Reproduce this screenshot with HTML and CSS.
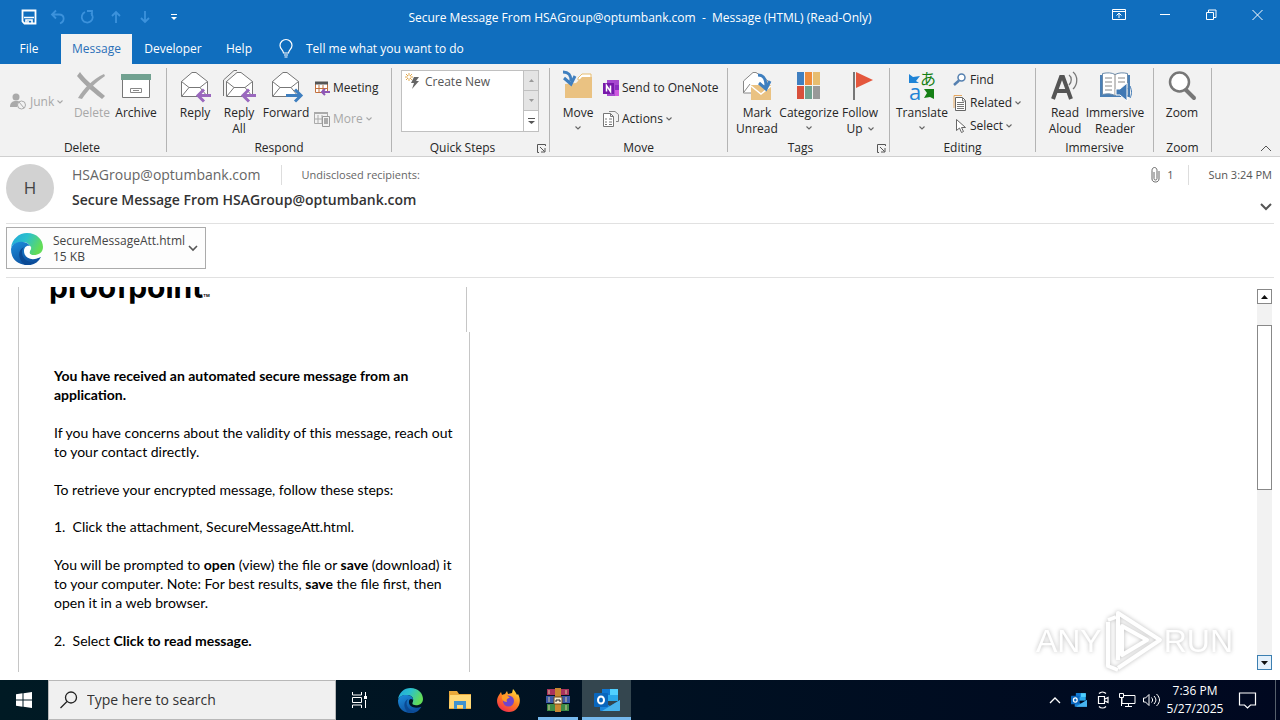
FILE: index.html
```html
<!DOCTYPE html>
<html lang="en">
<head>
<meta charset="utf-8">
<title>Secure Message From HSAGroup@optumbank.com</title>
<link rel="stylesheet" href="styles.css">
</head>
<body>
<svg class="defs" width="0" height="0" aria-hidden="true">
  <defs>
    <linearGradient id="edgeTop" x1="0" y1="0" x2="1" y2="0.4"><stop offset="0" stop-color="#1fa5dc"/><stop offset="0.5" stop-color="#2cc1cc"/><stop offset="1" stop-color="#62dc58"/></linearGradient>
    <linearGradient id="edgeLow" x1="0" y1="0" x2="0.6" y2="1"><stop offset="0" stop-color="#1d8fdd"/><stop offset="1" stop-color="#0c4d9c"/></linearGradient>
    <linearGradient id="fox" x1="0.8" y1="0" x2="0.2" y2="1"><stop offset="0" stop-color="#ffe03c"/><stop offset="0.5" stop-color="#ff7a22"/><stop offset="1" stop-color="#f0264f"/></linearGradient>
    <symbol id="chev" viewBox="0 0 6 4"><path d="M.5.5 3 3 5.500.5" fill="none" stroke="currentColor" stroke-width="1.100"/></symbol>
    <symbol id="envelope" viewBox="0 0 32 32"><path d="M2.500 11.500 13 2.500h4L28.500 11.500v15H2.500z" fill="#fff" stroke="#777"/><path d="M2.500 11.500 10 17.500h11l7.500-6M3 26l7-8.500M28 26l-7-8.500" fill="none" stroke="#777"/></symbol>
    <symbol id="edge" viewBox="0 0 32 32"><path d="M0 15C1 6 8 0 16 0c10 0 16 7 16 14 0 6-5 8-9 8-5 0-5-2-4-4 2-5-2-9-7-9C5 9 1 12 0 15z" fill="url(#edgeTop)"/><path d="M0 16C1 11 6 8 12 9c5 .5 8 4 7 6-3-2-5 0-5 3 0 6 7 9 16 6-3 6-9 9-15 8C5 31 0 25 0 16z" fill="url(#edgeLow)"/><path d="M13 14c-5 6 0 16 10 15-3 2-6 3-9 3C8 28 5 18 13 14z" fill="#0b4a94"/><path d="M19 13c-4-1-6 2-6 5 0 8 10 11 17 5 0-1-.5-1-1.500-1-9 2-12-2-9-5 1-2 1-3-.5-4z" fill="#fff"/></symbol>
    <symbol id="edgeDark" viewBox="0 0 32 32"><path d="M0 15C1 6 8 0 16 0c10 0 16 7 16 14 0 6-5 8-9 8-5 0-5-2-4-4 2-5-2-9-7-9C5 9 1 12 0 15z" fill="url(#edgeTop)"/><path d="M0 16C1 11 6 8 12 9c5 .5 8 4 7 6-3-2-5 0-5 3 0 6 7 9 16 6-3 6-9 9-15 8C5 31 0 25 0 16z" fill="url(#edgeLow)"/><path d="M13 14c-5 6 0 16 10 15-3 2-6 3-9 3C8 28 5 18 13 14z" fill="#0b4a94"/></symbol>
    <symbol id="outlook" viewBox="0 0 26 24"><path d="M8 1h16v12H8z" fill="#28a8ea"/><path d="M8 1h8v6H8z" fill="#0f78d4"/><path d="M16 1h8v6h-8z" fill="#50d0ff"/><path d="m6 12 10 6 10-6v10a1 1 0 0 1-1 1H7a1 1 0 0 1-1-1z" fill="#1a86dc"/><path d="m26 12-18 11h17a1 1 0 0 0 1-1z" fill="#48b4ee"/><rect y="5" width="14" height="14" rx="1" fill="#0a66bc"/><ellipse cx="7" cy="12" rx="3" ry="3.500" fill="none" stroke="#fff" stroke-width="2"/></symbol>
    <symbol id="launcher" viewBox="0 0 9 9"><path d="M8.500 2V.5H.5v8H2M3 3l4.500 4.500M8 4v4H4" fill="none" stroke="#555"/></symbol>
  </defs>
</svg>

<header class="top">
  <div class="titlebar">
    <div class="quick">
      <button aria-label="Save"><svg width="16" height="16" viewBox="0 0 16 16"><path d="M1.500 1.500h13v13h-11l-2-2z" fill="none" stroke="#fff" stroke-width="1.800"/><path d="M3 8.500h10M5 15v-4h6v4M7 12v3" fill="none" stroke="#fff" stroke-width="1.600"/></svg></button>
      <button class="dim" aria-label="Undo"><svg width="16" height="16" viewBox="0 0 16 16"><path d="M6 1.500 2 5.500l4 4M2.500 5.500H9c6 0 6 7 1 9" fill="none" stroke="currentColor" stroke-width="1.800"/></svg></button>
      <button class="dim" aria-label="Redo"><svg width="16" height="16" viewBox="0 0 16 16"><path d="M6 3a5.500 5.500 0 1 0 6 1M8 2h5v5" fill="none" stroke="currentColor" stroke-width="1.800"/></svg></button>
      <button class="dim" aria-label="Previous item"><svg width="16" height="16" viewBox="0 0 16 16"><path d="M8 14V3M4 7l4-4 4 4" fill="none" stroke="currentColor" stroke-width="1.800"/></svg></button>
      <button class="dim" aria-label="Next item"><svg width="16" height="16" viewBox="0 0 16 16"><path d="M8 2v11M4 9l4 4 4-4" fill="none" stroke="currentColor" stroke-width="1.800"/></svg></button>
      <button aria-label="Customize toolbar"><svg width="8" height="8" viewBox="0 0 8 8"><path d="M1 1.500h6" stroke="#fff"/><path d="M1 4h6L4 7z" fill="#fff"/></svg></button>
    </div>
    <h1 class="title">Secure Message From HSAGroup@optumbank.com&nbsp; -&nbsp; Message (HTML) (Read-Only)</h1>
    <div class="window-controls">
      <button aria-label="Ribbon display options"><svg width="14" height="12" viewBox="0 0 14 12"><path d="M.5.500h13v10H.5zM.5 2.500h13M7 9V4M4.500 6.500 7 4l2.500 2.500" fill="none" stroke="#fff"/></svg></button>
      <button aria-label="Minimize"><svg width="10" height="12" viewBox="0 0 10 12"><path d="M0 5.500h10" stroke="#fff"/></svg></button>
      <button aria-label="Restore"><svg width="11" height="12" viewBox="0 0 11 12"><path d="M.5 3.500h7v7h-7zM2.500 3V1h7.500v7.500H8" fill="none" stroke="#fff"/></svg></button>
      <button aria-label="Close"><svg width="11" height="12" viewBox="0 0 11 12"><path d="m.5 1 10 10M10.500 1l-10 10" stroke="#fff"/></svg></button>
    </div>
  </div>
  <nav class="tabs">
    <button class="tab file">File</button>
    <button class="tab active">Message</button>
    <button class="tab dev">Developer</button>
    <button class="tab help">Help</button>
    <button class="tell"><svg width="14" height="18" viewBox="0 0 14 18"><path d="M4.500 13c0-3-3.500-4-3.500-7.500a5.500 5.500 0 0 1 12 0C13 9 9.500 10 9.500 13zM5 15h4M5.500 17h3" fill="none" stroke="#fff" stroke-width="1.200"/></svg>Tell me what you want to do</button>
  </nav>
</header>

<section class="ribbon" aria-label="Ribbon">
  <div class="group g-delete">
    <div class="tools">
      <div class="stack one">
        <button class="small off"><svg width="17" height="17" viewBox="0 0 17 17"><circle cx="6" cy="4" r="3.500" fill="#aaa"/><path d="M0 14c0-5 3-6 6-6 2 0 4 0 5 2l-4 4z" fill="#aaa"/><circle cx="11.500" cy="12" r="4" fill="#f2f2f2" stroke="#aaa"/><path d="m9 9 5 6" stroke="#aaa"/></svg>Junk<svg class="chev" width="6" height="4"><use href="#chev"/></svg></button>
      </div>
      <button class="big off"><svg width="32" height="32" viewBox="0 0 32 32"><path d="M4 2c3 5 12 13 25 24l-3 3C13 19 6 12 1 6z" fill="#a6a6a6"/><path d="M28 4 29 6C20 12 11 21 6 29l-4-1C8 18 17 9 28 4z" fill="#aaa"/></svg>Delete</button>
      <button class="big"><svg width="32" height="32" viewBox="0 0 32 32"><path d="M2.500 9.500h27v18h-27z" fill="#fff" stroke="#777"/><path d="M1 4h30v6H1z" fill="#71a190"/><path d="M10.500 18.500h11v4h-11zM13 20.500h6" fill="none" stroke="#888"/></svg>Archive</button>
    </div>
    <h2>Delete</h2>
  </div>
  <div class="group g-respond">
    <div class="tools">
      <button class="big"><svg width="32" height="32"><use href="#envelope"/><path d="M32 25.500H19M25 19.500l-6 6 6 6" fill="none" stroke="#9a68be" stroke-width="3"/></svg>Reply</button>
      <button class="big"><svg width="32" height="32" viewBox="0 0 32 32"><path d="M.5 26V10L11 .5h3" fill="none" stroke="#777"/><use href="#envelope" x="1" y="0" width="32" height="32"/><path d="M33 25.500H20M26 19.500l-6 6 6 6" fill="none" stroke="#9a68be" stroke-width="3"/></svg><span>Reply</span><span>All</span></button>
      <button class="big wide"><svg width="32" height="32"><use href="#envelope"/><path d="M16 25.500h14M25 19.500l6 6-6 6" fill="none" stroke="#3f7fbf" stroke-width="3"/></svg>Forward</button>
      <div class="stack">
        <button class="small"><svg width="16" height="16" viewBox="0 0 16 16"><path d="M1.500 3.500h12v9h-12z" fill="#fff" stroke="#c2703d"/><path d="M1 3h13" stroke="#555" stroke-width="3"/><path d="M5 5v7M9 5v7M2 8.500h11" stroke="#c2703d"/><path d="M16 12H8M11 9l-3 3 3 3" fill="none" stroke="#8e57b5" stroke-width="2"/></svg>Meeting</button>
        <button class="small off"><svg width="16" height="16" viewBox="0 0 16 16"><path d="M.5 2.500h13v10H.5zM4 4v8M8 4v8M1 8h8" fill="none" stroke="#aaa"/><path d="M0 2h14" stroke="#aaa" stroke-width="2"/><path d="M8.500 5.500h7v10h-7z" fill="#f2f2f2" stroke="#999"/><path d="M10 7h4v6h-4z" fill="#aaa"/></svg>More<svg class="chev" width="6" height="4"><use href="#chev"/></svg></button>
      </div>
    </div>
    <h2>Respond</h2>
  </div>
  <div class="group g-quick">
    <div class="steps">
      <button class="step-item"><svg width="18" height="18" viewBox="0 0 18 18"><path d="M9 4h5l-3 4h3L7 16l2-6H6z" fill="#666"/><path d="M4 0v8M0 4h8M1 1l6 6M7 1 1 7" stroke="#e0a850"/><circle cx="4" cy="4" r="1.500" fill="#fff"/></svg>Create New</button>
      <div class="spin">
        <button class="off" aria-label="Scroll up"><svg width="5" height="3"><path d="M0 3h5L2.500 0z" fill="#999"/></svg></button>
        <button class="off" aria-label="Scroll down"><svg width="5" height="3"><path d="M0 0h5L2.500 3z" fill="#999"/></svg></button>
        <button aria-label="More steps"><svg width="7" height="7"><path d="M0 .5h7" stroke="#555"/><path d="M0 3h7L3.500 6z" fill="#555"/></svg></button>
      </div>
    </div>
    <h2>Quick Steps</h2>
    <button class="launch" aria-label="Quick Steps options"><svg width="9" height="9"><use href="#launcher"/></svg></button>
  </div>
  <div class="group g-move">
    <div class="tools">
      <button class="big"><svg width="32" height="32" viewBox="0 0 32 32"><path d="M16 8 20 4h9v6H16z" fill="#fff" stroke="#e7bd70"/><path d="M3 14l11-1 6-6h10v21H3z" fill="#eac282"/><path d="M1 2c6 0 8 3 8 9M2 8l7 6 4-8" fill="none" stroke="#3f7fbf" stroke-width="3"/></svg>Move<svg class="chev" width="6" height="4"><use href="#chev"/></svg></button>
      <div class="stack">
        <button class="small"><svg width="16" height="16" viewBox="0 0 16 16"><path d="M4 0h12v16H4z" fill="#a649cf"/><path d="M12 5h4v5h-4z" fill="#8a2fc0"/><path d="M12 10h4v6h-4z" fill="#d05be0"/><path d="M0 3h11v11H0z" fill="#7719aa"/><path d="M3.500 11.500v-6l4 6v-6" fill="none" stroke="#fff" stroke-width="1.500"/></svg>Send to OneNote</button>
        <button class="small"><svg width="16" height="16" viewBox="0 0 16 16"><path d="M.5 2.500h7l3 3v10H.5zM7.500 2.500v3h3" fill="#fff" stroke="#777"/><path d="M2 8h2M2 11h2M6 8h3M6 11h3M2 13.500h2M6 13.500h3" stroke="#777"/><path d="M6 .5h6l3.500 3v7H13" fill="none" stroke="#888"/></svg>Actions<svg class="chev" width="6" height="4"><use href="#chev"/></svg></button>
      </div>
    </div>
    <h2>Move</h2>
  </div>
  <div class="group g-tags">
    <div class="tools">
      <button class="big mid"><svg width="32" height="32" viewBox="0 0 32 32"><path d="M2.500 23V11L12 2.500h3L27 11v12z" fill="#fff" stroke="#888"/><path d="M3 22l6-8" stroke="#888"/><path d="M10 15h20v15H10z" fill="#eac282"/><path d="m10 16 10 8 10-8" fill="none" stroke="#fff" stroke-width="1.500"/><path d="M17 5c6 0 8 4 8 12M18 13l7 6 4-8" fill="none" stroke="#3f7fbf" stroke-width="3"/></svg><span>Mark</span><span>Unread</span></button>
      <button class="big cat"><svg width="32" height="32" viewBox="0 0 32 32"><path d="M4 2h7v13H4z" fill="#3f7fc0"/><path d="M12 2h7v13h-7z" fill="#ee8c3c"/><path d="M20 2h7v13h-7z" fill="#e7bd70"/><path d="M4 16h7v13H4z" fill="#d8503c"/><path d="M12 16h7v13h-7z" fill="#71a190"/><path d="M20 16h7v13h-7z" fill="#999"/></svg>Categorize<svg class="chev" width="6" height="4"><use href="#chev"/></svg></button>
      <button class="big"><svg width="32" height="32" viewBox="0 0 32 32"><path d="M10 2v28" stroke="#777" stroke-width="2"/><path d="M12 2l17 8-17 8z" fill="#e4573d"/></svg><span>Follow</span><span class="line">Up<svg class="chev" width="6" height="4"><use href="#chev"/></svg></span></button>
    </div>
    <h2>Tags</h2>
    <button class="launch" aria-label="Tags options"><svg width="9" height="9"><use href="#launcher"/></svg></button>
  </div>
  <div class="group g-edit">
    <div class="tools">
      <button class="big wider"><svg width="32" height="32" viewBox="0 0 32 32"><path d="M3 4l4 3 7-1-4 5 3 2H3z" fill="#1f83d6"/><path d="M28 29l-4-2-6 1 3-5-3-4h10z" fill="#168016"/><text x="3" y="30" class="glyph-a">a</text><text x="14" y="15" class="glyph-b">あ</text></svg>Translate<svg class="chev" width="6" height="4"><use href="#chev"/></svg></button>
      <div class="stack three">
        <button class="small"><svg width="14" height="14" viewBox="0 0 14 14"><circle cx="8.500" cy="4.500" r="3.500" fill="#fff" stroke="#5580b0" stroke-width="1.500"/><path d="M6 7.500 1 12" stroke="#5580b0" stroke-width="2.500"/></svg>Find</button>
        <button class="small"><svg width="14" height="16" viewBox="0 0 14 16"><path d="M1 13V.5h8" fill="none" stroke="#e7a860"/><path d="M2.500 2.500h7l3 3v10h-10z" fill="#fff" stroke="#666"/><path d="M4 7.500h7M4 9.500h7M4 11.500h7M4 13.500h7M9.500 3v3H12" fill="none" stroke="#777"/></svg>Related<svg class="chev" width="6" height="4"><use href="#chev"/></svg></button>
        <button class="small"><svg width="14" height="16" viewBox="0 0 14 16"><path d="M3.500 1.500v11l3-2.500 2 4.500 2-1-2-4h4z" fill="#fff" stroke="#666"/></svg>Select<svg class="chev" width="6" height="4"><use href="#chev"/></svg></button>
      </div>
    </div>
    <h2>Editing</h2>
  </div>
  <div class="group g-immersive">
    <div class="tools">
      <button class="big mid"><svg width="32" height="32" viewBox="0 0 32 32"><path d="m4 29 8-22h2l8 22M7 21h12" fill="none" stroke="#555" stroke-width="4"/><path d="M20 5c3 2 3 7 0 10M24 2c5 4 5 12 0 17" fill="none" stroke="#777" stroke-width="1.300"/></svg><span>Read</span><span>Aloud</span></button>
      <button class="big reader"><svg width="32" height="32" viewBox="0 0 32 32"><path d="M1 5h30v22H1z" fill="#4a7fb5"/><path d="M3.500 3.500c5-1 9-1 12.500 1 4-2 8-2 12.500-1v21c-5-1-9-1-12.500 1-4-2-8-2-12.500-1z" fill="#fff" stroke="#6a8aaa"/><path d="M16 4v21M6 8h7M6 12h7M6 16h7M6 20h7M19 8h7M19 12h7" stroke="#888"/><path d="M17 19h4l7-6v18l-7-6h-4z" fill="#3f78b4" stroke="#fff"/><path d="M29 18c2 3 2 5 0 8M31 16c2 5 2 8 0 12" fill="none" stroke="#3f78b4"/></svg><span>Immersive</span><span>Reader</span></button>
    </div>
    <h2>Immersive</h2>
  </div>
  <div class="group g-zoom">
    <div class="tools">
      <button class="big"><svg width="32" height="32" viewBox="0 0 32 32"><path d="m19 19 9 9" stroke="#777" stroke-width="4" stroke-linecap="round"/><circle cx="13.500" cy="12" r="9.500" fill="#fff" stroke="#777" stroke-width="2.500"/></svg>Zoom</button>
    </div>
    <h2>Zoom</h2>
  </div>
  <button class="collapse" aria-label="Collapse the ribbon"><svg width="12" height="7"><path d="m1 6 5-5 5 5" fill="none" stroke="#555"/></svg></button>
</section>

<section class="message-head">
  <div class="avatar">H</div>
  <div class="who">
    <div class="people"><span class="sender">HSAGroup@optumbank.com</span><span class="to">Undisclosed recipients:</span></div>
    <h2 class="subject">Secure Message From HSAGroup@optumbank.com</h2>
  </div>
  <div class="meta">
    <div class="meta-row"><span class="clip"><svg width="9" height="16" viewBox="0 0 9 16"><path d="M3 5v6.500c0 2 3 2 3 0V3.500c0-4-5-4-5 0V12c0 4 7 4 7 0V4" fill="none" stroke="#666"/></svg>1</span><time>Sun 3:24 PM</time></div>
    <button aria-label="Expand header"><svg width="12" height="8"><path d="m1 1 5 5 5-5" fill="none" stroke="#555" stroke-width="2"/></svg></button>
  </div>
</section>

<section class="attachments">
  <button class="attachment"><svg width="32" height="32"><use href="#edge"/></svg><span class="att-text">SecureMessageAtt.html<br>15 KB</span><svg width="10" height="7"><path d="m1 1 4 4 4-4" fill="none" stroke="#555" stroke-width="1.600"/></svg></button>
</section>

<main class="reading">
  <article class="mail">
    <div class="brand"><span class="brand-name">proofpoint</span><span class="tm">TM</span></div>
    <div class="mail-body">
      <p><strong>You have received an automated secure message from an application.</strong></p>
      <p>If you have concerns about the validity of this message, reach out to your contact directly.</p>
      <p>To retrieve your encrypted message, follow these steps:</p>
      <p class="step">1.&nbsp; Click the attachment, SecureMessageAtt.html.</p>
      <p>You will be prompted to <strong>open</strong> (view) the file or <strong>save</strong> (download) it to your computer. Note: For best results, <strong>save</strong> the file first, then open it in a web browser.</p>
      <p>2.&nbsp; Select <strong>Click to read message.</strong></p>
    </div>
  </article>
  <div class="scroll">
    <button aria-label="Scroll message up"><svg width="7" height="4"><path d="M0 4h7L3.500 0z" fill="#111"/></svg></button>
    <div class="track"><div class="thumb"></div></div>
    <button class="hot" aria-label="Scroll message down"><svg width="7" height="4"><path d="M0 0h7L3.500 4z" fill="#111"/></svg></button>
  </div>
  <div class="watermark"><span>ANY</span><svg width="62" height="66" viewBox="0 0 62 66"><g fill="none" stroke="#fff" stroke-width="4" stroke-linejoin="round"><path d="M16 52V5l42 27-42 28"/><path d="M6 14v44l10 4M6 12l8-3"/><path d="M20 18l25 14-25 15z"/></g></svg><span>RUN</span></div>
</main>

<footer class="taskbar">
  <button class="start" aria-label="Start"><svg width="16" height="16" viewBox="0 0 16 16"><path d="M0 2.200 6.500 1.300v6.200H0zM7.500 1.200 16 0v7.500H7.500zM0 8.500h6.500v6.200L0 13.800zM7.500 8.500H16V16l-8.500-1.200z" fill="#fff"/></svg></button>
  <label class="search"><svg width="18" height="18" viewBox="0 0 18 18"><circle cx="11" cy="6.500" r="5.500" fill="none" stroke="#222" stroke-width="1.300"/><path d="M7 10.500.5 17" stroke="#222" stroke-width="1.300"/></svg><input type="text" placeholder="Type here to search" aria-label="Type here to search"></label>
  <nav class="apps">
    <button class="view" aria-label="Task View"><svg width="18" height="16" viewBox="0 0 18 16"><path d="M1.500 0v3h9V0M1.500 16v-3h9v3M1.500 5.500h9v5h-9zM14.500 0v4M14.500 8v8" fill="none" stroke="#fff"/><path d="M13 4h3v3h-3z" fill="#fff"/></svg></button>
    <button aria-label="Edge"><svg width="25" height="25"><use href="#edgeDark"/></svg></button>
    <button aria-label="File Explorer"><svg width="22" height="20" viewBox="0 0 22 20"><path d="M0 1h8l2 3h12v15H0z" fill="#e9a93a"/><path d="M1 5h21v13H0z" fill="#ffd977"/><path d="M5 11h12v8h-3v-4H8v4H5z" fill="#3f92cf"/></svg></button>
    <button aria-label="Firefox"><svg width="24" height="24" viewBox="0 0 24 24"><path d="M4 4l1 3 3-1 2-3 1 3 4-1 1-4c2 2 3 4 4 6l1-1c5 9-1 18-9 18C2 24-3 14 2 7z" fill="url(#fox)"/><circle cx="11.500" cy="13" r="5.500" fill="#7045cc"/><path d="M5 7c4-1 6 1 8 3-3 0-4 2-3 4-4 0-6-3-5-7z" fill="#ff9c27"/></svg></button>
    <button class="running" aria-label="WinRAR"><svg width="24" height="24" viewBox="0 0 24 24"><path d="M1 1h22v6H1z" fill="#a8325c"/><path d="M0 8h24v7H0z" fill="#3b59a8"/><path d="M1 16h22v7H1z" fill="#3d8b46"/><path d="M3 2v4M20 2v4M3 9v5M20 9v5M3 17v5M20 17v5" stroke="#d8c99a"/><path d="M9 0h6v24H9z" fill="#c88631"/><path d="M8 9h8v7H8z" fill="#f2ead2" stroke="#704819"/><path d="M10 14v-2h4v2" fill="none" stroke="#222"/></svg></button>
    <button class="running current" aria-label="Outlook"><svg width="26" height="24"><use href="#outlook"/></svg></button>
  </nav>
  <div class="tray">
    <button aria-label="Show hidden icons"><svg width="12" height="7"><path d="m1 6 5-5 5 5" fill="none" stroke="#fff" stroke-width="1.300"/></svg></button>
    <button aria-label="Outlook status"><svg width="16" height="16"><use href="#outlook"/></svg></button>
    <button aria-label="Meet now"><svg width="14" height="18" viewBox="0 0 14 18"><path d="M2.500 5.500h6v7h-6zM9 8l3-1.500v5L9 10M3 2.500c2-2 5-2 7 0M3 15.500c2 2 5 2 7 0" fill="none" stroke="#fff" stroke-width="1.200"/></svg></button>
    <button aria-label="Network"><svg width="17" height="16" viewBox="0 0 17 16"><path d="M5 3.500h11v8H3V6M9.500 12v3M6 14.500h7M.5 1.500h4v4h-4zM2.500 6v8" fill="none" stroke="#fff"/></svg></button>
    <button aria-label="Volume"><svg width="17" height="14" viewBox="0 0 17 14"><path d="M.5 5v4h2L6 12.500v-11L2.500 5zM8.500 4.500c1.500 2 1.500 3 0 5M11 3c2.500 3 2.500 5 0 8M13.500 1c4 4 4 8 0 12" fill="none" stroke="#fff"/></svg></button>
    <time class="clock">7:36 PM<br>5/27/2025</time>
    <button class="notes" aria-label="Notifications"><svg width="17" height="17" viewBox="0 0 17 17"><path d="M.5 1h16v12h-5L8.500 16l-3-3h-5z" fill="none" stroke="#fff" stroke-width="1.200"/></svg></button>
  </div>
</footer>
</body>
</html>
```
FILE: styles.css
```css
* { box-sizing: border-box; }
body {
  margin: 0;
  height: 100vh;
  display: flex;
  flex-direction: column;
  overflow: hidden;
  background: #fff;
  color: #262626;
  font: 12px/16px "Open Sans", "Noto Sans", sans-serif;
}
.defs { position: absolute; }
h1, h2, p { margin: 0; font-size: inherit; font-weight: 400; }
button {
  margin: 0;
  padding: 0;
  border: 0;
  background: none;
  color: inherit;
  font: inherit;
}
svg { flex: none; overflow: visible; }

/* Title bar and tabs */
.top { background: #106ebe; color: #fff; }
.titlebar {
  display: grid;
  grid-template-columns: 1fr auto 1fr;
  align-items: center;
  height: 34px;
}
.title { padding-top: 2px; }
.quick { display: flex; padding-left: 14px; }
.quick button, .window-controls button {
  display: flex;
  align-items: center;
  justify-content: center;
}
.quick button { width: 29px; }
.quick .dim { color: #3c92dc; }
.window-controls { display: flex; justify-content: flex-end; padding-bottom: 4px; }
.window-controls button { width: 46px; }
.tabs { display: flex; height: 30px; }
.tab { width: 60px; }
.tab.file { padding-right: 2px; margin-right: 1px; }
.tab.active { width: 71px; background: #f2f2f2; color: #2a70b8; }
.tab.dev { width: 76px; margin-left: 3px; }
.tab.help { width: 56px; }
.tell { display: flex; align-items: center; gap: 13px; margin-left: 12px; }

/* Ribbon */
.ribbon {
  position: relative;
  display: flex;
  padding: 4px 0;
  background: #f2f2f2;
  border-bottom: 1px solid #d0d0d0;
}
.group {
  position: relative;
  display: flex;
  flex-direction: column;
  padding-left: 6px;
  border-right: 1px solid #b4b4b4;
}
.group h2 { line-height: 8px; text-align: center; margin-left: -6px; }
.g-delete { width: 167px; padding-left: 10px; }
.g-delete h2 { margin-left: -12px; }
.g-respond { width: 225px; }
.g-quick { width: 158px; }
.g-quick h2, .g-tags h2 { padding-right: 16px; }
.g-move { width: 178px; }
.g-tags { width: 162px; }
.g-edit { width: 146px; }
.g-immersive { width: 118px; }
.g-zoom { width: 58px; }
.tools { display: flex; height: 76px; }
.big {
  display: flex;
  flex-direction: column;
  align-items: center;
  align-self: flex-start;
  width: 44px;
  padding-top: 2px;
  white-space: nowrap;
}
.big > svg:first-child { margin-bottom: 3px; }
.big > .chev { margin-top: 5px; }
.mid { width: 46px; }
.wide { width: 50px; }
.wider { width: 52px; }
.reader { width: 54px; }
.cat { width: 58px; }
.line { display: flex; align-items: center; gap: 5px; }
.chev { color: #666; }
.off, .off .chev { color: #a8a8a8; }
.stack {
  display: grid;
  grid-auto-rows: 31px;
  justify-items: start;
  padding: 4px 0 0 3px;
}
.stack.one { width: 60px; padding: 18px 0 0; }
.stack.three { grid-auto-rows: 23px; padding: 0 0 0 5px; }
.small { display: flex; align-items: center; gap: 3px; white-space: nowrap; }
.steps {
  display: flex;
  width: 138px;
  height: 62px;
  margin: 2px 0 12px 3px;
  border: 1px solid #c0c0c0;
  background: #fff;
}
.step-item {
  display: flex;
  flex: 1;
  align-items: center;
  align-self: flex-start;
  gap: 2px;
  padding: 1px 3px;
  height: 22px;
  color: #555;
}
.spin { display: grid; grid-template-rows: 1fr 1fr 1fr; width: 15px; border-left: 1px solid #c0c0c0; }
.spin button { display: grid; place-items: center; border-bottom: 1px solid #c0c0c0; }
.spin button:last-child { border: 0; }
.spin .off { background: #e4e4e4; }
.launch { position: absolute; right: 3px; bottom: -1px; display: flex; }
.collapse { margin: auto 8px 0 auto; display: flex; }
.glyph-a { font: 22px "Open Sans", sans-serif; fill: #1f83d6; }
.glyph-b { font: 16px "Noto Sans CJK JP", sans-serif; fill: #168016; }

/* Message header */
.message-head {
  display: flex;
  margin: 0 6px;
  padding: 7px 0 11px;
  border-bottom: 1px solid #e1e1e1;
}
.avatar {
  width: 48px;
  height: 48px;
  border-radius: 50%;
  background: #d2d2d2;
  color: #444;
  font-size: 17px;
  line-height: 48px;
  text-align: center;
}
.who { margin-left: 18px; flex: 1; }
.people { display: flex; align-items: center; height: 22px; color: #666; }
.sender { font-size: 14px; padding-right: 21px; border-right: 1px solid #ddd; line-height: 20px; }
.to { margin-left: 19px; font-size: 11px; }
.subject { margin-top: 4px; font-size: 14px; line-height: 20px; font-weight: 600; color: #333; }
.meta {
  display: flex;
  flex-direction: column;
  align-items: flex-end;
  gap: 17px;
  padding-right: 2px;
  font-size: 11px;
  color: #555;
}
.meta-row { display: flex; align-items: center; height: 22px; }
.clip { display: flex; align-items: center; gap: 7px; padding-right: 15px; border-right: 1px solid #ddd; line-height: 20px; }
.meta time { margin-left: 19px; }
.meta button { display: flex; }

/* Attachments */
.attachments { margin: 0 6px; padding: 3px 0 8px; border-bottom: 1px solid #e1e1e1; }
.attachment {
  display: flex;
  align-items: center;
  width: 200px;
  height: 42px;
  padding: 1px 7px 0 4px;
  border: 1px solid #ababab;
  background: #fdfdfd;
  color: #444;
  text-align: left;
}
.att-text { flex: 1; margin-left: 10px; }

/* Reading pane */
.reading {
  position: relative;
  display: flex;
  flex: 1;
  min-height: 0;
  justify-content: space-between;
  padding: 9px 8px 8px 18px;
}
.mail { display: flex; flex-direction: column; overflow: hidden; color: #000; }
.brand {
  display: flex;
  align-items: flex-end;
  width: 449px;
  height: 45px;
  padding: 0 0 27px 30px;
  border: solid #c6c6c6;
  border-width: 0 1px;
}
.brand-name { font: 700 30px/36px "Inter", sans-serif; }
.tm { font: 700 4px/10px "Inter", sans-serif; padding-bottom: 4px; }
.mail-body {
  flex: 1;
  width: 452px;
  padding: 34px 11px 0 35px;
  border: solid #c6c6c6;
  border-width: 0 1px;
  font: 14px/19px "Lato", sans-serif;
}
.mail-body p { margin-bottom: 19px; }
.mail-body .step { margin-top: -1px; }
.scroll { display: flex; flex-direction: column; width: 15px; margin: 2px 0; }
.scroll button {
  display: grid;
  place-items: center;
  height: 15px;
  border: 1px solid #888;
  background: #fff;
}
.scroll .hot { border-color: #3c7fb1; background: #e5f1fb; }
.track { flex: 1; padding-top: 21px; background: #f2f2f2; }
.thumb { height: 50%; border: 1px solid #888; background: #fff; }
.watermark {
  position: absolute;
  right: 47px;
  bottom: 6px;
  display: flex;
  align-items: center;
  color: #fff;
  font: 32px/66px "Liberation Sans", sans-serif;
  filter: drop-shadow(0 0 2px #bbb);
}

/* Taskbar */
.taskbar { display: flex; height: 40px; background: linear-gradient(90deg, #001a24, #000820); color: #fff; }
.start { width: 48px; display: grid; place-items: center; }
.search {
  display: flex;
  align-items: center;
  gap: 9px;
  width: 288px;
  padding-left: 11px;
  border: 1px solid #b8b8b8;
  background: #f0f0f0;
}
.search input {
  flex: 1;
  min-width: 0;
  border: 0;
  padding: 0;
  background: none;
  font: 14px/20px "Open Sans", sans-serif;
}
.search input::placeholder { color: #333; opacity: 1; }
.apps { display: flex; margin-right: auto; }
.apps button { display: grid; place-items: center; width: 49px; }
.apps .view { width: 48px; margin-right: 2px; }
.running { background: linear-gradient(#76b9ed, #76b9ed) 50% 100% / 40px 3px no-repeat; }
.apps .current {
  background: linear-gradient(#76b9ed, #76b9ed) 50% 100% / 100% 3px no-repeat #34464f;
}
.tray { display: flex; align-items: stretch; padding-right: 4px; }
.tray button { display: grid; place-items: center; width: 24px; }
.clock { width: 64px; padding: 2px 0 0; line-height: 18px; text-align: center; white-space: nowrap; }
.tray .notes { width: 49px; padding-right: 8px; border-right: 1px solid #56606c; }
```
